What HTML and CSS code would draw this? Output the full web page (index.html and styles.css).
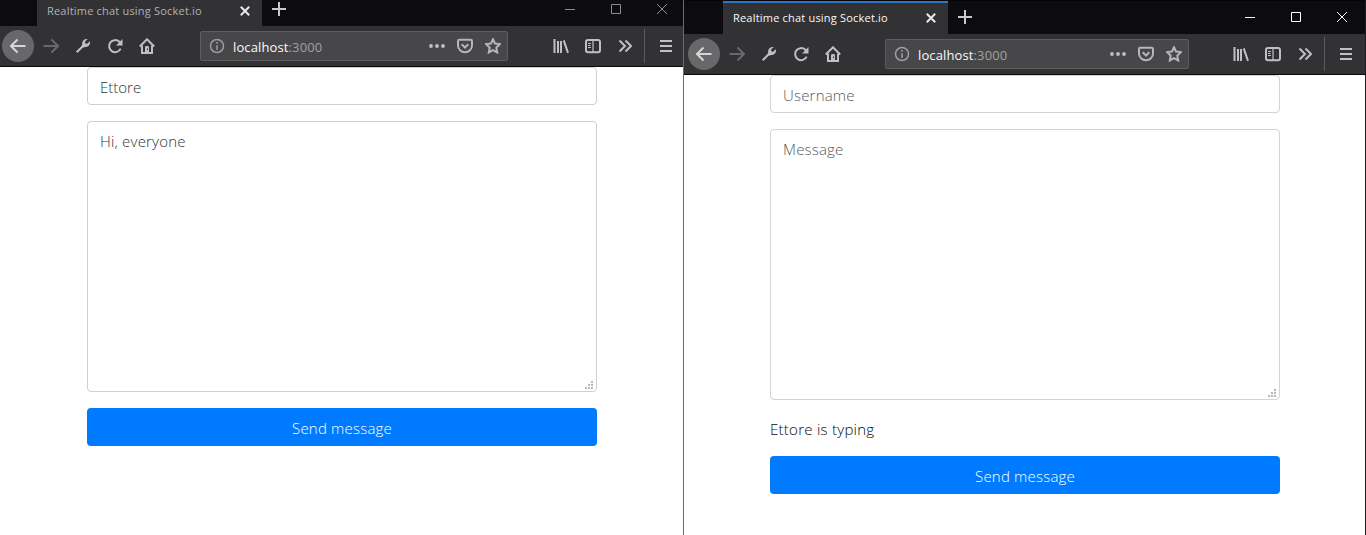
FILE: index.html
```
<!DOCTYPE html>
<html lang="en">
<head>
<meta charset="utf-8">
<title>Realtime chat using Socket.io</title>
<link rel="stylesheet" href="styles.css">
</head>
<body>
<svg class="symbols" aria-hidden="true">
  <symbol id="back" viewBox="0 0 16 16"><path d="M15.500 8H1.500M7.500 1.500L1 8l6.500 6.500"/></symbol>
  <symbol id="forward" viewBox="0 0 16 16"><path d="M.5 8h14M8.500 1.500L15 8l-6.500 6.500"/></symbol>
  <symbol id="wrench" viewBox="0 0 16 16"><path d="M1.700 14.300L9 7"/><path class="fill" d="M12.800 1.100A4.400 4.400 0 0 0 7.300 6.500L6.500 8l1.800 1.700 1.500-.8a4.400 4.400 0 0 0 5-5.700l-2.600 2.500-1.900-.3-.3-1.800z"/></symbol>
  <symbol id="reload" viewBox="0 0 16 16"><path d="M13.600 10.600A6 6 0 1 1 12.300 3.800L13.700 5.200"/><path class="fill" d="M15.500 1v6.400H9.100z"/></symbol>
  <symbol id="home" viewBox="0 0 16 16"><path d="M.8 8.500L8 1.300l7.200 7.200"/><path d="M3 7.500V15h10V7.500"/><path class="fill" d="M6 15V9.300q0-1.300 1.300-1.300h1.400q1.300 0 1.300 1.300V15z"/><path class="hole" d="M8 10.500h1v1.500H8z"/></symbol>
  <symbol id="info" viewBox="0 0 16 16"><circle cx="8" cy="8" r="6.500"/><path d="M8 7.200V12M8 4v1.700"/></symbol>
  <symbol id="dots" viewBox="0 0 16 16"><circle class="fill" cx="2" cy="8" r="1.900"/><circle class="fill" cx="8" cy="8" r="1.900"/><circle class="fill" cx="14" cy="8" r="1.900"/></symbol>
  <symbol id="pocket" viewBox="0 0 16 16"><path d="M2.200 1.800h11.600q1.200 0 1.200 1.200v4.500a7 6.700 0 0 1-14 0V3q0-1.200 1.200-1.200z"/><path d="M4.700 6.300L8 9.500l3.300-3.200"/></symbol>
  <symbol id="star" viewBox="0 0 16 16"><path d="M8 1.300l2 4.200 4.900.6-3.600 3.400.9 5L8 12.200l-4.200 2.300.9-5L1.100 6.100 6 5.500z"/></symbol>
  <symbol id="library" viewBox="0 0 16 16"><path d="M1.500 1v14M5 3v12M8 3v12M10.700 2.300L15 14.800"/></symbol>
  <symbol id="sidebar" viewBox="0 0 16 16"><rect x="1" y="2" width="14" height="12.300" rx="2"/><path class="thin" d="M8 2v12M3 5.500h3M3 7.500h2.500M3 9.500h3"/></symbol>
  <symbol id="more" viewBox="0 0 16 16"><path d="M2.500 2.500L8 8l-5.500 5.500M8.500 2.500L14 8l-5.500 5.500"/></symbol>
  <symbol id="menu" viewBox="0 0 16 16"><path d="M2 3h12M2 8h12M2 13h12"/></symbol>
  <symbol id="close" viewBox="0 0 12 12"><path d="M1.800 1.800l8.400 8.400M10.200 1.800l-8.400 8.400"/></symbol>
  <symbol id="plus" viewBox="0 0 14 14"><path d="M7 0v14M0 7h14"/></symbol>
  <symbol id="grip" viewBox="0 0 9 9"><path class="dots" d="M6 0h2v2H6zM3 3h2v2H3zM6 3h2v2H6zM0 6h2v2H0zM3 6h2v2H3zM6 6h2v2H6z"/></symbol>
</svg>
<main class="desktop">
  <section class="window window-left">
    <header class="titlebar">
      <div class="tab"><span class="tab-title">Realtime chat using Socket.io</span><svg class="tab-close"><use href="#close"/></svg></div>
      <svg class="new-tab"><use href="#plus"/></svg>
      <div class="controls">
        <svg viewBox="0 0 10 10"><path d="M0 5.500h10"/></svg>
        <svg viewBox="0 0 10 10"><path d="M.5.5h9v9h-9z"/></svg>
        <svg viewBox="0 0 10 10"><path d="M0 0l10 10M10 0L0 10"/></svg>
      </div>
    </header>
    <nav class="toolbar">
      <span class="back"><svg class="icon"><use href="#back"/></svg></span>
      <span class="slot dim"><svg class="icon"><use href="#forward"/></svg></span>
      <span class="slot"><svg class="icon"><use href="#wrench"/></svg></span>
      <span class="slot"><svg class="icon"><use href="#reload"/></svg></span>
      <span class="slot"><svg class="icon"><use href="#home"/></svg></span>
      <div class="address">
        <svg class="icon info"><use href="#info"/></svg>
        <span class="url">localhost<span class="port">:3000</span></span>
        <svg class="icon"><use href="#dots"/></svg><svg class="icon"><use href="#pocket"/></svg><svg class="icon"><use href="#star"/></svg>
      </div>
      <div class="tools">
        <span class="slot"><svg class="icon"><use href="#library"/></svg></span>
        <span class="slot"><svg class="icon"><use href="#sidebar"/></svg></span>
        <span class="slot"><svg class="icon"><use href="#more"/></svg></span>
        <span class="divider"></span>
        <span class="slot"><svg class="icon"><use href="#menu"/></svg></span>
      </div>
    </nav>
    <div class="page">
      <div class="field name">Ettore</div>
      <div class="field message">Hi, everyone<svg class="grip"><use href="#grip"/></svg></div>
      <button class="send">Send message</button>
    </div>
  </section>
  <section class="window window-right">
    <header class="titlebar">
      <div class="tab"><span class="tab-title">Realtime chat using Socket.io</span><svg class="tab-close"><use href="#close"/></svg></div>
      <svg class="new-tab"><use href="#plus"/></svg>
      <div class="controls">
        <svg viewBox="0 0 10 10"><path d="M0 5.500h10"/></svg>
        <svg viewBox="0 0 10 10"><path d="M.5.5h9v9h-9z"/></svg>
        <svg viewBox="0 0 10 10"><path d="M0 0l10 10M10 0L0 10"/></svg>
      </div>
    </header>
    <nav class="toolbar">
      <span class="back"><svg class="icon"><use href="#back"/></svg></span>
      <span class="slot dim"><svg class="icon"><use href="#forward"/></svg></span>
      <span class="slot"><svg class="icon"><use href="#wrench"/></svg></span>
      <span class="slot"><svg class="icon"><use href="#reload"/></svg></span>
      <span class="slot"><svg class="icon"><use href="#home"/></svg></span>
      <div class="address">
        <svg class="icon info"><use href="#info"/></svg>
        <span class="url">localhost<span class="port">:3000</span></span>
        <svg class="icon"><use href="#dots"/></svg><svg class="icon"><use href="#pocket"/></svg><svg class="icon"><use href="#star"/></svg>
      </div>
      <div class="tools">
        <span class="slot"><svg class="icon"><use href="#library"/></svg></span>
        <span class="slot"><svg class="icon"><use href="#sidebar"/></svg></span>
        <span class="slot"><svg class="icon"><use href="#more"/></svg></span>
        <span class="divider"></span>
        <span class="slot"><svg class="icon"><use href="#menu"/></svg></span>
      </div>
    </nav>
    <div class="page">
      <div class="field placeholder">Username</div>
      <div class="field message placeholder">Message<svg class="grip"><use href="#grip"/></svg></div>
      <p class="typing">Ettore is typing</p>
      <button class="send">Send message</button>
    </div>
  </section>
</main>
</body>
</html>
```
FILE: styles.css
```
* { box-sizing: border-box; }
body { margin: 0; background: #fff; font-family: "Open Sans", "Noto Sans", sans-serif; overflow: hidden; }
.symbols { position: absolute; width: 0; height: 0; }
.desktop { display: flex; width: 1366px; height: 535px; }
.window { flex: none; height: 535px; background: #fff; }
.window-left { width: 684px; border-right: 1px solid #6b6b6d; }
.window-right { width: 682px; border-right: 1px solid #1c1c1e; }
.titlebar { display: flex; background: #0c0c0e; color: #b1b1b3; }
.window-left .titlebar { height: 26px; padding-left: 37px; }
.window-right .titlebar { height: 34px; padding-left: 39px; border-top: 1px solid #050507; color: #f9f9fa; }
.tab { display: flex; align-items: center; justify-content: space-between; width: 225px; padding: 0 11px 0 10px; background: #323234; }
.window-left .tab { padding-bottom: 5px; }
.window-right .tab { border-top: 2px solid #3274c4; padding-bottom: 1px; }
.tab-title { font-size: 11px; line-height: 16px; letter-spacing: .2px; white-space: nowrap; }
.tab-close { width: 12px; height: 12px; stroke: #e8e8e9; stroke-width: 2; }
.new-tab { width: 14px; height: 14px; margin: 2px 0 0 10px; stroke: #c8c8ca; stroke-width: 2; }
.window-right .new-tab { margin-top: 9px; }
.controls { display: flex; gap: 36px; margin: 4px 16px 0 auto; }
.window-right .controls { margin: 11px 18px 0 auto; }
.controls svg { width: 10px; height: 10px; fill: none; stroke: #8b8b8d; stroke-width: 1; }
.window-right .controls svg { stroke: #fff; }
.toolbar { display: flex; align-items: center; height: 41px; background: #323234; border-bottom: 1px solid #09090a; padding-left: 2px; }
.window-right .toolbar { padding-left: 4px; }
.icon { display: block; flex: none; width: 16px; height: 16px; fill: none; stroke: #c0c0c2; stroke-width: 2; }
.fill { fill: #c0c0c2; stroke: none; }
.hole { fill: #323234; stroke: none; }
.thin { stroke-width: 1.200; }
.back { display: grid; place-items: center; width: 32px; height: 32px; margin-right: 1px; border-radius: 50%; background: #68686a; }
.back .icon { stroke: #d6d6d7; }
.slot { display: grid; place-items: center; width: 32px; height: 32px; }
.dim .icon { stroke: #69696b; }
.address { display: flex; align-items: center; gap: 12px; height: 30px; margin-left: 37px; padding: 0 6px 0 8px; border: 1px solid #5d5d5f; border-radius: 2px; background: #474749; }
.window-left .address { width: 308px; }
.window-right .address { width: 304px; margin-left: 36px; }
.address .icon { stroke: #b6b6b8; }
.address .info { width: 16px; height: 16px; margin-right: -4px; stroke: #9d9d9f; stroke-width: 1.500; }
.url { margin-right: auto; padding-top: 2px; color: #f9f9fa; font-size: 13px; line-height: 18px; letter-spacing: .12px; }
.port { color: #a0a0a2; }
.tools { display: flex; align-items: center; margin-left: 37px; }
.window-right .tools { margin-left: 36px; }
.divider { width: 1px; height: 34px; margin: 0 5px 0 3px; background: #5b5b5d; }
.page { width: 510px; margin-left: 87px; font-weight: 300; font-size: 15px; line-height: 24px; letter-spacing: .2px; }
.window-right .page { margin-left: 86px; }
.field { height: 38px; margin-bottom: 16px; padding: 7px 12px; border: 1px solid #ced4da; border-radius: 4px; color: #303438; }
.window-left .field { border-color: #d0d0d0; }
.name { letter-spacing: 0; }
.message { position: relative; height: 271px; }
.window-right .placeholder { color: #545b61; }
.grip { position: absolute; right: 2px; bottom: 1px; width: 9px; height: 9px; }
.dots { fill: #b8b8b8; }
.typing { margin: 17px 0 15px; color: #08090a; letter-spacing: .26px; }
.send { display: block; width: 510px; height: 38px; padding: 1px 0 0; border: 0; border-radius: 4px; background: #007bff; color: #fff; font: inherit; letter-spacing: .2px; }
```
